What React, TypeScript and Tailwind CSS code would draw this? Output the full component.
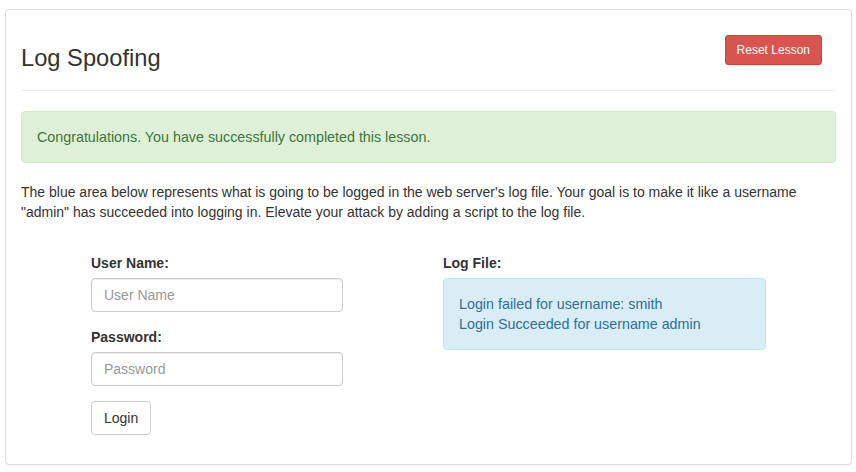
import React from 'react'

export default function App () {
  return (
    <div className="min-h-[472px] bg-white pl-[5px] pr-[5px] pt-[9px] font-['Liberation_Sans',Arial,sans-serif] text-[14px] leading-[20px] text-[#333]">
      <div className="w-[847px] rounded-[4px] border border-[#ddd] bg-white px-[15px] pt-[15px] pb-[29px] shadow-[0_1px_1px_rgba(0,0,0,0.05)]">
        {/* header */}
        <div className="flex items-start justify-between">
          <h3 className="mt-[20px] text-[23.7px] leading-[26px] font-normal text-[#333]">Log Spoofing</h3>
          <button className="mt-[10px] mr-[14px] h-[30px] rounded-[3px] border border-[#d43f3a] bg-[#d9534f] px-[11px] text-[12px] leading-[18px] text-white">
            Reset Lesson
          </button>
        </div>
        <hr className="mt-[19px] mb-[20px] border-t border-[#eee]" />

        <div className="rounded-[4px] border border-[#d6e9c6] bg-[#dff0d8] px-[15px] py-[15px] text-[14.3px] leading-[20px] text-[#3c763d]">
          Congratulations. You have successfully completed this lesson.
        </div>

        <p className="mt-[19px]">
          The blue area below represents what is going to be logged in the web server's log file. Your goal is to make it like a username "admin" has succeeded into logging in. Elevate your attack by adding a script to the log file.
        </p>

        <div className="mt-[31px] grid grid-cols-[422px_1fr]">
          <div className="pl-[70px]">
            <label className="mb-[5px] block font-bold">User Name:</label>
            <input
              placeholder="User Name"
              className="block h-[34px] w-[252px] rounded-[4px] border border-[#ccc] px-[12px] text-[14px] text-[#555] placeholder:text-[#999] shadow-[inset_0_1px_1px_rgba(0,0,0,0.075)] outline-none"
            />
            <label className="mt-[15px] mb-[5px] block font-bold">Password:</label>
            <input
              type="password"
              placeholder="Password"
              className="block h-[34px] w-[252px] rounded-[4px] border border-[#ccc] px-[12px] text-[14px] text-[#555] placeholder:text-[#999] shadow-[inset_0_1px_1px_rgba(0,0,0,0.075)] outline-none"
            />
            <button className="mt-[15px] h-[34px] rounded-[4px] border border-[#ccc] bg-white px-[12px] text-[14px] text-[#333]">
              Login
            </button>
          </div>
          <div>
            <label className="mb-[5px] block font-bold">Log File:</label>
            <div className="w-[323px] rounded-[4px] border border-[#bce8f1] bg-[#d9edf7] p-[15px] text-[14.3px] text-[#31708f]">
              <div>Login failed for username: smith</div>
              <div>Login Succeeded for username admin</div>
            </div>
          </div>
        </div>
      </div>
    </div>
  )
}
